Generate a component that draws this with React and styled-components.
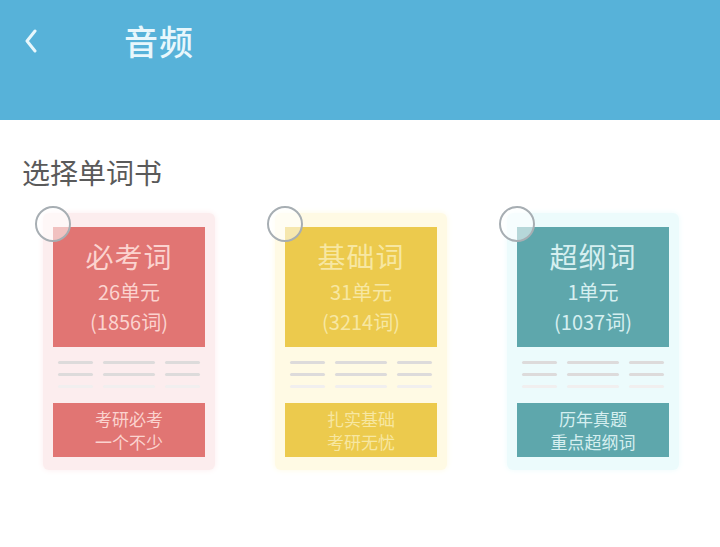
import React from 'react';
import styled, { createGlobalStyle } from 'styled-components';

const GlobalStyle = createGlobalStyle`
  html, body {
    margin: 0;
    padding: 0;
    background: #ffffff;
    font-family: "Noto Sans CJK SC", "Noto Sans", sans-serif;
  }
`;

const books = [
  {
    name: '必考词',
    units: '26单元',
    words: '(1856词)',
    tagline: ['考研必考', '一个不少'],
    main: '#e17573',
    pale: '#fcedee',
    ink: '#fbd3cf',
  },
  {
    name: '基础词',
    units: '31单元',
    words: '(3214词)',
    tagline: ['扎实基础', '考研无忧'],
    main: '#ecca4d',
    pale: '#fffae4',
    ink: '#f7e7a2',
  },
  {
    name: '超纲词',
    units: '1单元',
    words: '(1037词)',
    tagline: ['历年真题', '重点超纲词'],
    main: '#5ea7ac',
    pale: '#ecfbfc',
    ink: '#d6eff0',
  },
];

const Page = styled.div`
  width: 720px;
  height: 547px;
  overflow: hidden;
  background: #ffffff;
`;

const Header = styled.header`
  height: 120px;
  background: #57b2d9;
  display: flex;
  align-items: flex-start;
  padding: 19px 0 0 24px;
  box-sizing: border-box;
`;

const Back = styled.button`
  border: none;
  background: none;
  padding: 0;
  width: 20px;
  height: 44px;
  display: flex;
  align-items: center;
  cursor: pointer;
`;

const Title = styled.h1`
  margin: 0 0 0 80px;
  font-size: 34px;
  font-weight: 500;
  line-height: 44px;
  color: #e8f7fc;
  letter-spacing: 1px;
`;

const Section = styled.h2`
  margin: 0;
  padding: 32px 0 0 22px;
  font-size: 28px;
  font-weight: 400;
  line-height: 40px;
  color: #5a5a5a;
`;

const Shelf = styled.div`
  display: flex;
  gap: 60px;
  padding: 21px 0 0 43px;
`;

const Card = styled.div`
  position: relative;
  width: 172px;
  box-sizing: border-box;
  padding: 14px 10px 13px;
  border-radius: 6px;
  background: ${(p) => p.$pale};
  box-shadow: 0 0 6px ${(p) => p.$pale};
`;

const Pick = styled.span`
  position: absolute;
  left: -8px;
  top: -7px;
  width: 32px;
  height: 32px;
  border-radius: 50%;
  border: 2px solid #a7aeb3;
  background: rgba(255, 255, 255, 0.55);
`;

const Cover = styled.div`
  height: 120px;
  background: ${(p) => p.$main};
  color: ${(p) => p.$ink};
  display: flex;
  flex-direction: column;
  align-items: center;
  padding-top: 8px;
  box-sizing: border-box;
`;

const Name = styled.div`
  font-size: 28px;
  line-height: 42px;
  letter-spacing: 1px;
`;

const Meta = styled.div`
  font-size: 20px;
  line-height: 30px;
`;

const Lines = styled.div`
  height: 56px;
  box-sizing: border-box;
  padding: 14px 4px 0 5px;
  display: grid;
  grid-template-columns: 35px 52px 35px;
  column-gap: 10px;
  row-gap: 9px;
  align-content: start;
`;

const Dash = styled.span`
  height: 3px;
  border-radius: 2px;
  background: ${(p) => (p.$faint ? '#f1efef' : '#dddbdb')};
`;

const Tag = styled.div`
  height: 54px;
  background: ${(p) => p.$main};
  color: ${(p) => p.$ink};
  display: flex;
  flex-direction: column;
  align-items: center;
  justify-content: center;
  font-size: 17px;
  line-height: 23px;
`;

const Chevron = () => (
  <svg width="14" height="24" viewBox="0 0 14 24" fill="none">
    <path d="M11 2 L3 12 L11 22" stroke="#e8f7fc" strokeWidth="3" strokeLinecap="round" strokeLinejoin="round" />
  </svg>
);

export default function App() {
  return (
    <Page>
      <GlobalStyle />
      <Header>
        <Back aria-label="返回">
          <Chevron />
        </Back>
        <Title>音频</Title>
      </Header>
      <Section>选择单词书</Section>
      <Shelf>
        {books.map((b) => (
          <Card key={b.name} $pale={b.pale}>
            <Pick />
            <Cover $main={b.main} $ink={b.ink}>
              <Name>{b.name}</Name>
              <Meta>{b.units}</Meta>
              <Meta>{b.words}</Meta>
            </Cover>
            <Lines>
              <Dash /><Dash /><Dash />
              <Dash /><Dash /><Dash />
              <Dash $faint /><Dash $faint /><Dash $faint />
            </Lines>
            <Tag $main={b.main} $ink={b.ink}>
              {b.tagline.map((t) => (
                <span key={t}>{t}</span>
              ))}
            </Tag>
          </Card>
        ))}
      </Shelf>
    </Page>
  );
}
